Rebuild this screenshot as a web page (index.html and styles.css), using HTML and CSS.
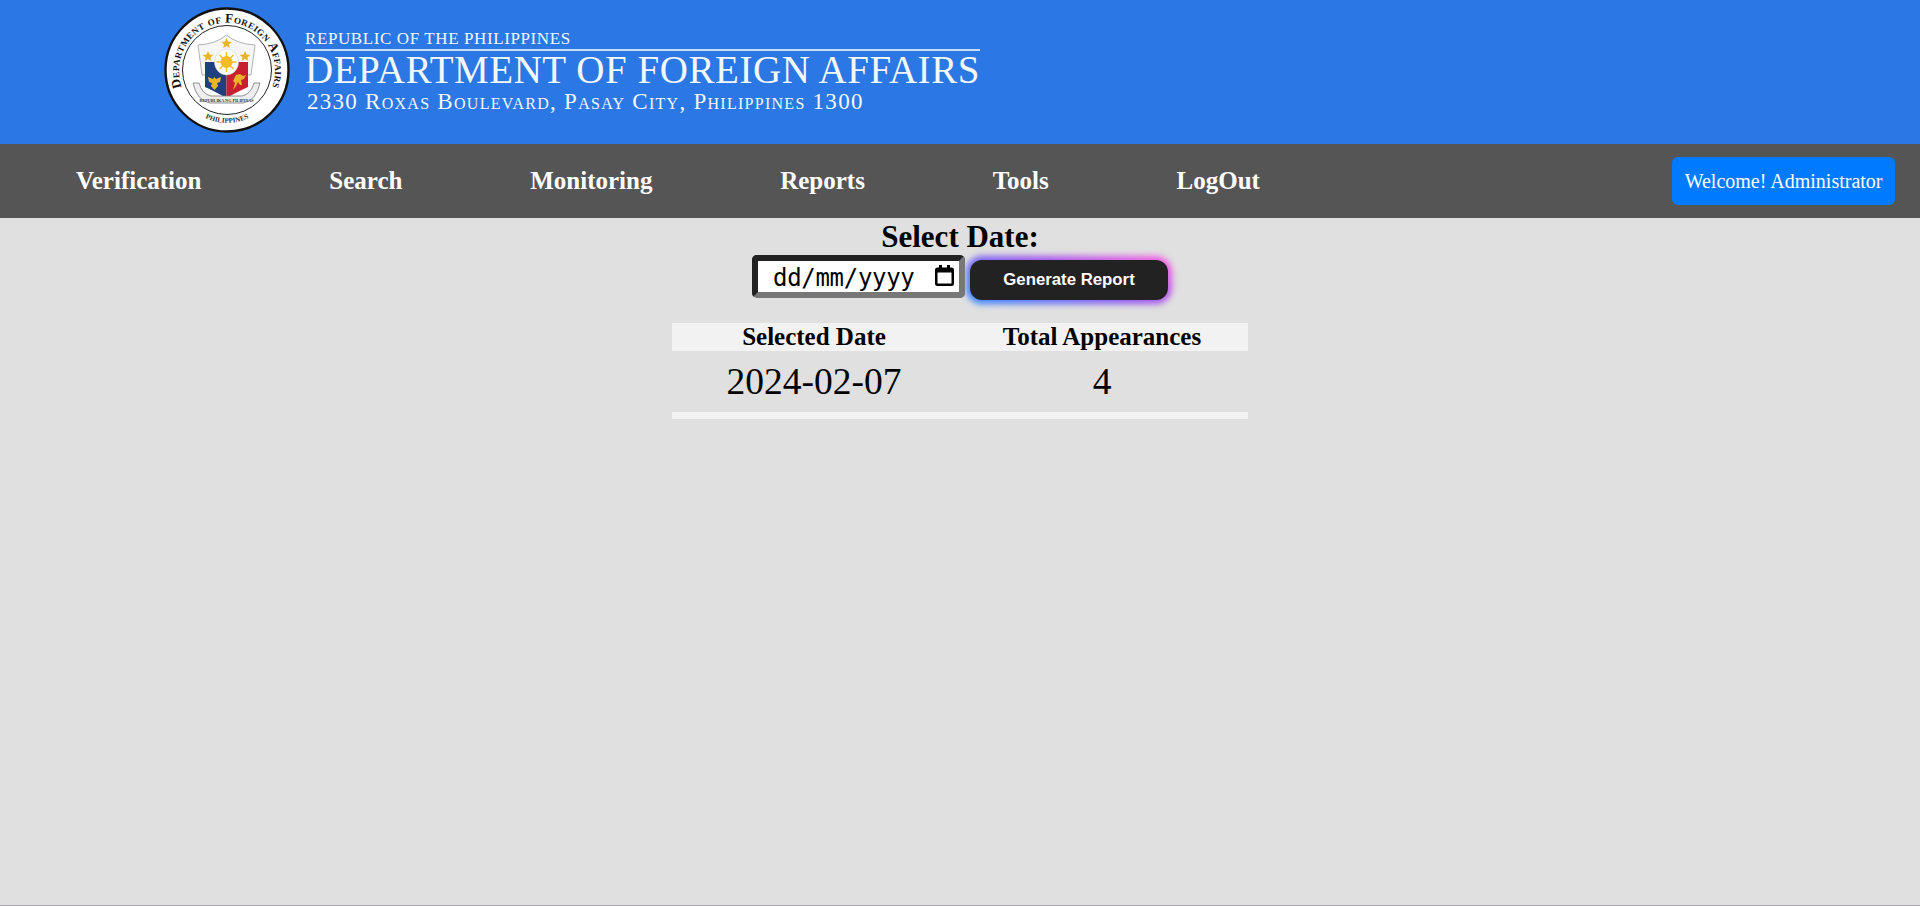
FILE: index.html
```html
<!DOCTYPE html>
<html lang="en">
<head>
<meta charset="utf-8">
<title>Department of Foreign Affairs</title>
<link rel="stylesheet" href="styles.css">
</head>
<body>
<header class="banner">
  <svg class="seal" viewBox="0 0 126 126" width="126" height="126" aria-label="DFA seal">
    <defs>
      <path id="arcTop" d="M 21 87 A 48 48 0 1 1 105 87"/>
      <path id="arcBottom" d="M 34 107 A 52 52 0 0 0 92 107"/>
    </defs>
    <circle cx="63" cy="63" r="61.5" fill="#fff" stroke="#111" stroke-width="2.4"/>
    <circle cx="63" cy="63" r="44.5" fill="#fff" stroke="#222" stroke-width="1"/>
    <text class="seal-top"><textPath href="#arcTop" startOffset="50%" text-anchor="middle">Department of Foreign Affairs</textPath></text>
    <text class="seal-bottom"><textPath href="#arcBottom" startOffset="50%" text-anchor="middle">PHILIPPINES</textPath></text>
    <path d="M34 38 Q52 37 62.500 28 Q73 37 91 38 L87 68 L38 68 Z" fill="#f6f6f6" stroke="#aaa" stroke-width="0.9"/>
    <path d="M41 55 H62.500 V91 Q50 84 41 80 Z" fill="#1f3f7f"/>
    <path d="M62.500 55 H84 V80 Q75 84 62.500 91 Z" fill="#c8202f"/>
    <ellipse cx="62.500" cy="55" rx="12" ry="13" fill="#fff" stroke="#ccc" stroke-width="0.6"/>
    <circle cx="62.500" cy="55" r="6" fill="#f5bd23"/>
    <path d="M62.500 45V65M52.500 55H72.500M55.500 48L69.500 62M69.500 48L55.500 62" stroke="#f5bd23" stroke-width="1.500"/>
    <g fill="#e8b52a">
      <path d="M62.500 31l1.500 3.600 3.800.3-2.900 2.500 1 3.700-3.400-2.100-3.400 2.100 1-3.700-2.900-2.500 3.800-.3z"/>
      <path d="M44 44l1.500 3.600 3.800.3-2.900 2.500 1 3.700-3.400-2.100-3.400 2.100 1-3.700-2.900-2.500 3.800-.3z"/>
      <path d="M81 44l1.500 3.600 3.800.3-2.900 2.500 1 3.700-3.400-2.100-3.400 2.100 1-3.700-2.900-2.500 3.800-.3z"/>
      <path d="M44 70l5 2 1.500-2 1.500 2 5-2-1 5-3 1 1 3-3.500 4-3.500-4 1-3-3-1z"/>
      <path d="M69 83l2-7-2-2 3-6 4-1 3 2 3-1-2 4-3 1 1 5-2 0-2-3-2 4z"/>
    </g>
    <path d="M29 76 Q33 94 46 96 L79 96 Q92 94 96 76 L90 76 Q87 87 78 89 L47 89 Q38 87 35 76 Z" fill="#eee" stroke="#777" stroke-width="0.8"/>
    <text class="seal-motto" x="62.500" y="94.500" text-anchor="middle">REPUBLIKA NG PILIPINAS</text>
  </svg>
  <div class="masthead">
    <div class="mast-top">Republic of the Philippines</div>
    <div class="mast-name">Department of Foreign Affairs</div>
    <div class="mast-addr">2330 Roxas Boulevard, Pasay City, Philippines 1300</div>
  </div>
</header>

<nav class="menu">
  <a class="menu-link" href="#">Verification</a>
  <a class="menu-link" href="#">Search</a>
  <a class="menu-link" href="#">Monitoring</a>
  <a class="menu-link" href="#">Reports</a>
  <a class="menu-link" href="#">Tools</a>
  <a class="menu-link" href="#">LogOut</a>
  <span class="welcome">Welcome! Administrator</span>
</nav>

<main class="content">
  <form class="report-form">
    <label class="date-label" for="date">Select Date:</label>
    <div class="form-row">
      <div class="date-field">
        <input class="date-input" id="date" type="text" placeholder="dd/mm/yyyy">
        <svg class="date-icon" viewBox="0 0 19 21" width="19" height="21" aria-hidden="true">
          <path d="M4 0h3v2.500h5V0h3v2.500h1.500A2.500 2.500 0 0 1 19 5v13.500a2.500 2.500 0 0 1-2.500 2.500h-14A2.500 2.500 0 0 1 0 18.500V5a2.500 2.500 0 0 1 2.500-2.500H4zM2.500 7.500v11h14v-11z" fill="#000" fill-rule="evenodd"/>
        </svg>
      </div>
      <button class="generate" type="button">Generate Report</button>
    </div>
  </form>
  <table class="report">
    <thead>
      <tr><th class="col-date">Selected Date</th><th>Total Appearances</th></tr>
    </thead>
    <tbody>
      <tr><td>2024-02-07</td><td>4</td></tr>
      <tr class="strip"><td colspan="2"></td></tr>
    </tbody>
  </table>
</main>
</body>
</html>
```
FILE: styles.css
```css
* { box-sizing: border-box; }
html, body { margin: 0; padding: 0; }
body {
  height: 906px;
  overflow: hidden;
  display: flex;
  flex-direction: column;
  background: #e0e0e0;
  border-bottom: 1px solid #aaa6ae;
  font-family: "Liberation Serif", "Times New Roman", serif;
  color: #000;
}

/* Banner */
.banner {
  height: 144px;
  flex: none;
  display: flex;
  align-items: flex-start;
  gap: 15px;
  padding: 7px 0 0 164px;
  background: #2b78e4;
}
.seal { flex: none; }
.seal-top {
  font: small-caps bold 13px "Liberation Serif", serif;
  fill: #111;
  letter-spacing: 0.35px;
}
.seal-bottom { font: bold 7px "Liberation Serif", serif; fill: #333; }
.seal-motto { font: bold 4.2px "Liberation Serif", serif; fill: #333; }

.masthead {
  width: 675px;
  padding-top: 21px;
  color: #f3f7fe;
  font-variant: small-caps;
}
.mast-top {
  height: 23px;
  border-bottom: 2px solid #c9ddf8;
  font-size: 17px;
  line-height: 22px;
  letter-spacing: 0.6px;
  font-variant: normal;
  text-transform: uppercase;
  white-space: nowrap;
}
.mast-name {
  font-size: 39px;
  line-height: 38px;
  letter-spacing: 0.55px;
  font-variant: normal;
  text-transform: uppercase;
  white-space: nowrap;
}
.mast-addr {
  padding-left: 2px;
  font-size: 23px;
  line-height: 26px;
  letter-spacing: 1.27px;
  white-space: nowrap;
}

/* Menu */
.menu {
  height: 74px;
  flex: none;
  display: flex;
  align-items: center;
  padding: 0 25px 0 12px;
  background: #555;
}
.menu-link {
  padding: 0 63.8px 0 64px;
  color: #fff;
  font-size: 25px;
  font-weight: bold;
  text-decoration: none;
}
.welcome {
  margin-left: auto;
  padding: 0 12.5px;
  height: 48px;
  display: flex;
  align-items: center;
  border-radius: 6px;
  background: #007bff;
  color: #fff;
  font-size: 20px;
  white-space: nowrap;
}

/* Content */
.content {
  display: flex;
  flex-direction: column;
  align-items: center;
}
.report-form {
  display: flex;
  flex-direction: column;
  align-items: center;
}
.date-label {
  font-size: 31px;
  font-weight: bold;
  line-height: 36px;
  margin-top: 1px;
}
.form-row {
  display: flex;
  align-items: flex-start;
  gap: 5px;
}
.date-field {
  position: relative;
  width: 213px;
  height: 43px;
}
.date-input {
  width: 100%;
  height: 100%;
  padding: 2px 2px 0 15px;
  border: 6px solid;
  border-color: #222 #777 #777 #222;
  border-radius: 5px;
  background: #fff;
  color: #000;
  font-family: "DejaVu Sans Mono", monospace;
  font-size: 24px;
  letter-spacing: -0.3px;
}
.date-input::placeholder {
  color: #000;
  opacity: 1;
}
.date-icon {
  position: absolute;
  top: 10px;
  right: 11px;
}
.generate {
  position: relative;
  width: 198px;
  height: 40px;
  margin-top: 5px;
  border: 0;
  border-radius: 12px;
  background: #222;
  color: #fff;
  font-family: "Liberation Sans", Arial, sans-serif;
  font-size: 16.8px;
  font-weight: bold;
}
.generate::before {
  content: "";
  position: absolute;
  inset: -4px;
  z-index: -1;
  border-radius: 16px;
  background: linear-gradient(20deg, #2f8bff, #9a55f0 55%, #ff5fe0);
  filter: blur(3px);
}

/* Table */
.report {
  width: 576px;
  margin-top: 23px;
  border-collapse: collapse;
  table-layout: fixed;
}
.report .col-date { width: 284px; }
.report th {
  height: 28px;
  padding: 0;
  background: #f2f2f2;
  font-size: 25px;
  line-height: 28px;
  font-weight: bold;
}
.report td {
  height: 61px;
  padding: 0;
  text-align: center;
  font-size: 37.5px;
}
.report .strip td {
  height: 7px;
  background: #f2f2f2;
}
```
